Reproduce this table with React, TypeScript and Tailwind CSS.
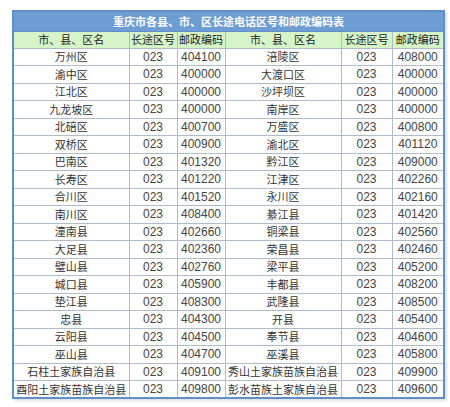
const rows: [string, string, string, string, string, string][] = [
  ["万州区", "023", "404100", "涪陵区", "023", "408000"],
  ["渝中区", "023", "400000", "大渡口区", "023", "400000"],
  ["江北区", "023", "400000", "沙坪坝区", "023", "400000"],
  ["九龙坡区", "023", "400000", "南岸区", "023", "400000"],
  ["北碚区", "023", "400700", "万盛区", "023", "400800"],
  ["双桥区", "023", "400900", "渝北区", "023", "401120"],
  ["巴南区", "023", "401320", "黔江区", "023", "409000"],
  ["长寿区", "023", "401220", "江津区", "023", "402260"],
  ["合川区", "023", "401520", "永川区", "023", "402160"],
  ["南川区", "023", "408400", "綦江县", "023", "401420"],
  ["潼南县", "023", "402660", "铜梁县", "023", "402560"],
  ["大足县", "023", "402360", "荣昌县", "023", "402460"],
  ["璧山县", "023", "402760", "梁平县", "023", "405200"],
  ["城口县", "023", "405900", "丰都县", "023", "408200"],
  ["垫江县", "023", "408300", "武隆县", "023", "408500"],
  ["忠县", "023", "404300", "开县", "023", "405400"],
  ["云阳县", "023", "404500", "奉节县", "023", "404600"],
  ["巫山县", "023", "404700", "巫溪县", "023", "405800"],
  ["石柱土家族自治县", "023", "409100", "秀山土家族苗族自治县", "023", "409900"],
  ["酉阳土家族苗族自治县", "023", "409800", "彭水苗族土家族自治县", "023", "409600"],
];

const headers = ["市、县、区名", "长途区号", "邮政编码", "市、县、区名", "长途区号", "邮政编码"];

const cell = "border border-[#aebccc] text-center p-0 leading-none whitespace-nowrap overflow-hidden";

export default function App() {
  return (
    <div className="w-[450px] h-[407px] bg-white pt-[10px] pl-[12px] font-['Noto_Sans_CJK_SC','Noto_Sans',sans-serif] text-[11px] text-[#333]">
      <table className="table-fixed border-collapse border-2 border-[#5f8fcb] w-[431px] shadow-[2px_2px_2px_rgba(0,0,0,0.12)]">
        <colgroup>
          <col className="w-[116px]" />
          <col className="w-[48px]" />
          <col className="w-[48px]" />
          <col className="w-[116px]" />
          <col className="w-[51px]" />
          <col className="w-[52px]" />
        </colgroup>
        <thead>
          <tr className="h-[20px] bg-[#6e9dd4]">
            <th colSpan={6} className="border border-[#5f8fcb] text-center text-white font-bold text-[11px] p-0 leading-none">
              重庆市各县、市、区长途电话区号和邮政编码表
            </th>
          </tr>
          <tr className="h-[17px] bg-[#d5f5c9]">
            {headers.map((h, i) => (
              <th key={i} className={`${cell} font-normal text-[#222]`}>
                {h}
              </th>
            ))}
          </tr>
        </thead>
        <tbody>
          {rows.map((r, i) => (
            <tr key={i} className="h-[17.5px] bg-white">
              {r.map((c, j) => (
                <td
                  key={j}
                  className={`${cell} ${j % 3 === 0 ? "" : "font-['Liberation_Sans',Arial,sans-serif] text-[12px] text-[#444]"}`}
                >
                  {c}
                </td>
              ))}
            </tr>
          ))}
        </tbody>
      </table>
    </div>
  );
}
